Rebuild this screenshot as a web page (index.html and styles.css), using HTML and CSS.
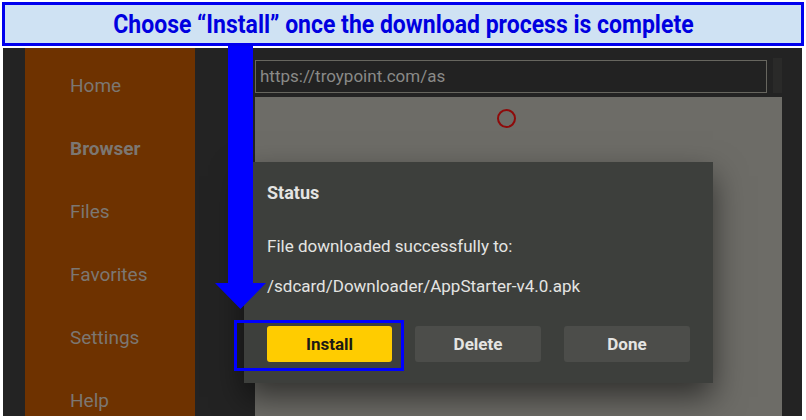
FILE: index.html
```html
<!doctype html>
<html lang="en">
<head>
	<meta charset="UTF-8">
	<title>Downloader - Install</title>
	<link rel="stylesheet" href="styles.css">
</head>
<body>
	<div class="shot">
		<div class="banner">
			<span class="banner-text">Choose “Install” once the download process is complete</span>
		</div>

		<div class="screen">
			<ul class="menu">
				<li>Home</li>
				<li class="active">Browser</li>
				<li>Files</li>
				<li>Favorites</li>
				<li>Settings</li>
				<li>Help</li>
			</ul>

			<div class="browser">
				<div class="url-row">
					<div class="url">https://troypoint.com/as</div>
					<div class="url-side"></div>
				</div>
				<div class="page">
					<span class="loader"></span>
				</div>
			</div>

			<div class="dialog">
				<h3 class="dialog-title">Status</h3>
				<p class="msg">File downloaded successfully to:</p>
				<p class="path">/sdcard/Downloader/AppStarter-v4.0.apk</p>
				<div class="actions">
					<button class="btn btn-install">Install</button>
					<button class="btn">Delete</button>
					<button class="btn">Done</button>
				</div>
			</div>
		</div>

		<!-- annotation overlay -->
		<svg class="arrow" width="51" height="263" viewBox="0 0 51 263">
			<polygon points="13,0 38,0 38,237 51,237 25.5,263 0,237 13,237" fill="#0000ff"/>
		</svg>
		<div class="callout"></div>
	</div>
</body>
</html>
```

FILE: styles.css
```css
*{
	padding:0;
	margin:0;
	box-sizing:border-box;
}
body{
	background:#fff;
	font-family:Roboto, "Liberation Sans", sans-serif;
}
.shot{
	position:relative;
	width:806px;
	height:420px;
}
.banner{
	margin:2px 2px 0;
	height:44px;
	border:3px solid #0000ee;
	background:#cfe2f3;
	display:flex;
	align-items:center;
	justify-content:center;
	overflow:hidden;
}
.banner-text{
	display:inline-block;
	white-space:nowrap;
	font-weight:700;
	font-size:25px;
	color:#0000e0;
	transform:scaleX(0.92);
}
.screen{
	position:relative;
	margin:2px 0 0 3px;
	width:799px;
	height:368px;
	background:#232323;
	display:flex;
	padding-left:22px;
	overflow:hidden;
}
.menu{
	list-style:none;
	width:170px;
	background:#6e3200;
	padding-top:6px;
}
.menu li{
	height:63px;
	line-height:63px;
	padding-left:45px;
	font-size:19px;
	color:#7c7772;
}
.menu li.active{
	font-weight:700;
}
.browser{
	margin-left:60px;
	width:527px;
	display:flex;
	flex-direction:column;
}
.url-row{
	display:flex;
	padding-top:10px;
	height:45px;
}
.url{
	margin-top:2px;
	width:512px;
	height:33px;
	border:1px solid #67665f;
	background:#222;
	color:#8a8a88;
	font-size:17px;
	line-height:31px;
	padding-left:4px;
}
.url-side{
	margin-left:6px;
	width:9px;
	background:#2a2a29;
}
.page{
	margin-top:4px;
	flex:1;
	background:#6d6c67;
}
.loader{
	display:block;
	width:19px;
	height:19px;
	margin:12px 0 0 242px;
	border:2px solid #8e0a0a;
	border-radius:50%;
}
.dialog{
	position:absolute;
	left:241px;
	top:114px;
	width:469px;
	height:221px;
	background:#3d3f3c;
	padding:0 23px;
	box-shadow:0 14px 30px rgba(0,0,0,.55);
	color:#e4e4e2;
}
.dialog-title{
	margin-top:19px;
	font-size:18px;
	line-height:24px;
	font-weight:700;
}
.msg{
	margin-top:29px;
	font-size:17px;
	line-height:24px;
}
.path{
	margin-top:16px;
	font-size:17px;
	line-height:24px;
}
.actions{
	margin-top:28px;
	display:flex;
	gap:23px;
}
.btn{
	width:126px;
	height:36px;
	border:none;
	border-radius:3px;
	background:#4c4d4a;
	color:#e4e4e2;
	font-family:Roboto, "Liberation Sans", sans-serif;
	font-size:17px;
	font-weight:700;
}
.btn-install{
	width:125px;
	background:#ffcc00;
	color:#1c1a14;
}
.arrow{
	position:absolute;
	left:215px;
	top:44px;
}
.callout{
	position:absolute;
	left:234px;
	top:318px;
	width:170px;
	height:51px;
	border:3px solid #0000ff;
}
```
